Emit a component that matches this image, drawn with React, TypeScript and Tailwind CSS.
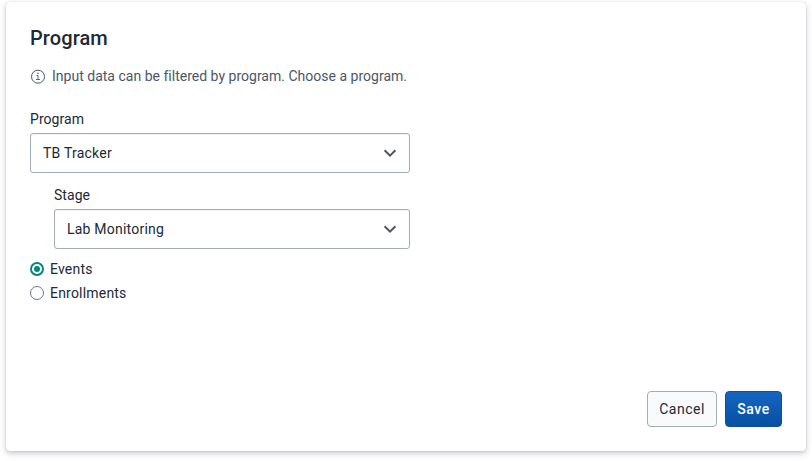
import React from "react";

function Chevron() {
  return (
    <svg width="16" height="16" viewBox="0 0 16 16" fill="none" stroke="#4a5768" strokeWidth="2">
      <path d="M2.6 5.3 8 10.7l5.4-5.4" />
    </svg>
  );
}

function Select({ value }: { value: string }) {
  return (
    <div className="flex h-10 items-center justify-between rounded-[3px] border border-[#a0adba] bg-white pl-3 pr-[11px] shadow-[inset_0_1px_1px_0_rgba(48,54,60,0.06)]">
      <span className="text-sm leading-4 tracking-[0.22px]">{value}</span>
      <Chevron />
    </div>
  );
}

function Radio({ label, checked }: { label: string; checked?: boolean }) {
  return (
    <div className="flex h-6 items-center gap-[6px]">
      <svg width="14" height="14" viewBox="0 0 14 14">
        <circle cx="7" cy="7" r={checked ? 6 : 6.5} fill="#fff" stroke={checked ? "#00897b" : "#6c7787"} strokeWidth={checked ? 2 : 1} />
        {checked && <circle cx="7" cy="7" r="3" fill="#00897b" />}
      </svg>
      <span className="text-sm leading-4 tracking-[0.2px]">{label}</span>
    </div>
  );
}

export default function App() {
  return (
    <main className="h-[461px] w-[812px] bg-white px-[6px] pt-[2px] font-[Roboto,sans-serif] text-[#212934]">
      <section className="flex h-[449px] flex-col rounded-[4px] bg-white px-6 pb-6 pt-6 shadow-[0_0_1px_rgba(64,75,90,0.35),0_2px_4px_rgba(64,75,90,0.2),0_3px_8px_rgba(64,75,90,0.12)]">
        <h1 className="text-xl font-medium leading-6 tracking-[0.1px]">Program</h1>
        <div className="mt-[18px] flex h-4 items-center gap-[6px] text-sm text-[#4a5768]">
          <svg width="16" height="16" viewBox="0 0 16 16" fill="none" stroke="#4a5768">
            <circle cx="8" cy="8.7" r="6.5" />
            <path d="M6.5 7.5H8v4M6 11.5h4" strokeWidth=".9" />
            <circle cx="8" cy="5.3" r=".8" fill="#4a5768" stroke="none" />
          </svg>
          <p className="leading-4 tracking-[0.01px]">Input data can be filtered by program. Choose a program.</p>
        </div>
        <div className="mt-[27px] w-[380px]">
          <label className="mb-[6px] block text-sm leading-4 tracking-[0.05px]">Program</label>
          <Select value="TB Tracker" />
          <div className="ml-6 mt-[14px]">
            <label className="mb-[6px] block text-sm leading-4 tracking-[0.05px]">Stage</label>
            <Select value="Lab Monitoring" />
          </div>
          <div className="mt-2">
            <Radio label="Events" checked />
            <Radio label="Enrollments" />
          </div>
        </div>
        <div className="mt-auto flex justify-end gap-2">
          <button className="h-9 w-[70px] rounded border border-[#a0adba] bg-[#f9fafb] text-sm tracking-[0.5px]">Cancel</button>
          <button className="h-9 w-[57px] rounded border border-[#104f9e] bg-linear-to-b from-[#1565c0] to-[#0650a3] text-sm font-medium tracking-[0.5px] text-white">Save</button>
        </div>
      </section>
    </main>
  );
}
